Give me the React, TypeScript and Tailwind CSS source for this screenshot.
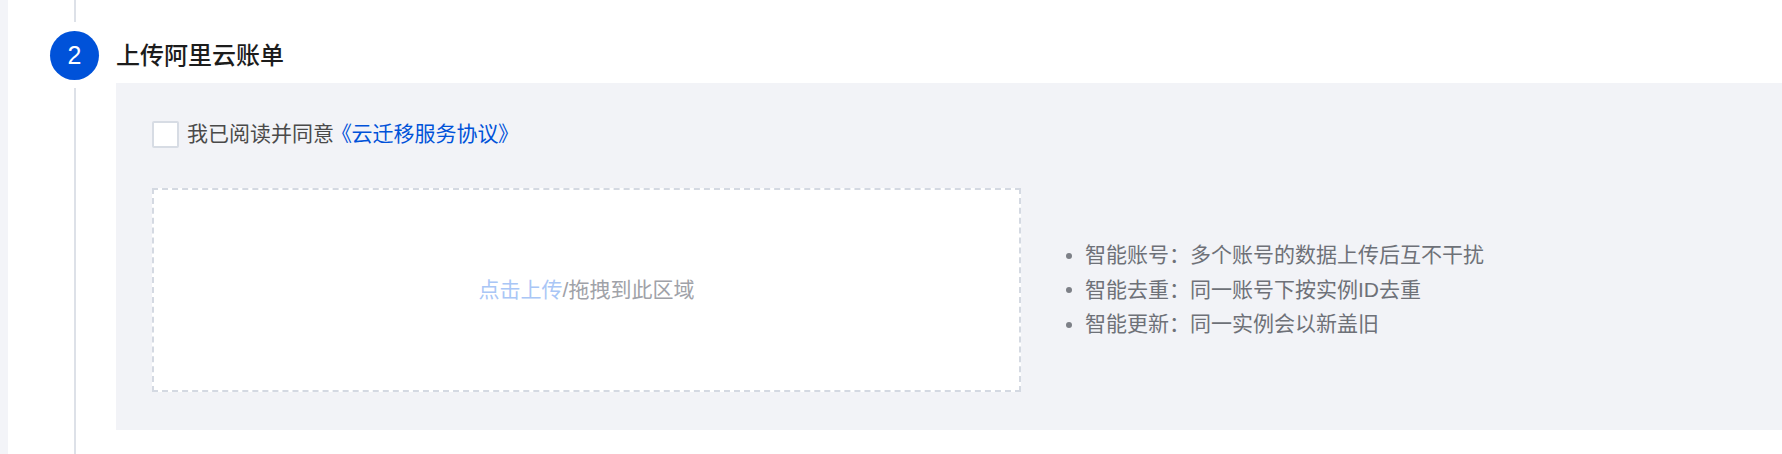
export default function App() {
  const tips = [
    ["智能账号：", "多个账号的数据上传后互不干扰"],
    ["智能去重：", "同一账号下按实例ID去重"],
    ["智能更新：", "同一实例会以新盖旧"],
  ];

  return (
    <div className="flex h-[454px] w-full bg-white font-['Liberation_Sans','Noto_Sans_CJK_SC',sans-serif]">
      <div className="w-[8px] shrink-0 bg-[#f3f4f8]" />

      {/* step rail */}
      <div className="ml-[42px] flex w-[49px] shrink-0 flex-col items-center">
        <div className="h-[22px] w-[2px] bg-[#dde1e8]" />
        <div className="mt-[9px] flex h-[49px] w-[49px] items-center justify-center rounded-full bg-[#0052d9] text-[25px] font-medium text-white">
          2
        </div>
        <div className="mt-[8px] w-[2px] flex-1 bg-[#dde1e8]" />
      </div>

      <div className="ml-[17px] flex min-w-0 flex-1 flex-col">
        <div className="mt-[31px] flex h-[49px] items-center text-[24px] font-medium text-[#1c1c1c]">
          上传阿里云账单
        </div>

        <div className="mt-[3px] bg-[#f2f3f7] pb-[38px] pl-[36px] pt-[36px]">
          <label className="flex h-[30px] items-center text-[21px] text-[#4a4a4a]">
            <span className="h-[27px] w-[27px] rounded-[2px] border-2 border-[#d7dce4] bg-white" />
            <span className="ml-[8px]">我已阅读并同意</span>
            <span className="ml-[7px] text-[#0052d9] [font-feature-settings:'palt']">《云迁移服务协议》</span>
          </label>

          <div className="mt-[39px] flex items-center">
            <div className="flex h-[204px] w-[869px] items-center justify-center border-2 border-dashed border-[#d4d9e2] bg-white text-[21px]">
              <span className="text-[#a9c6f6]">点击上传</span>
              <span className="text-[#9fa2a8]">/拖拽到此区域</span>
            </div>

            <ul className="ml-[45px] text-[21px] leading-[34.5px] text-[#6e7178]">
              {tips.map(([k, v]) => (
                <li key={k} className="flex items-center">
                  <span className="h-[6px] w-[6px] rounded-full bg-[#7d8087]" />
                  <span className="ml-[13px]">{k}</span>
                  <span>{v}</span>
                </li>
              ))}
            </ul>
          </div>
        </div>
      </div>
    </div>
  );
}
